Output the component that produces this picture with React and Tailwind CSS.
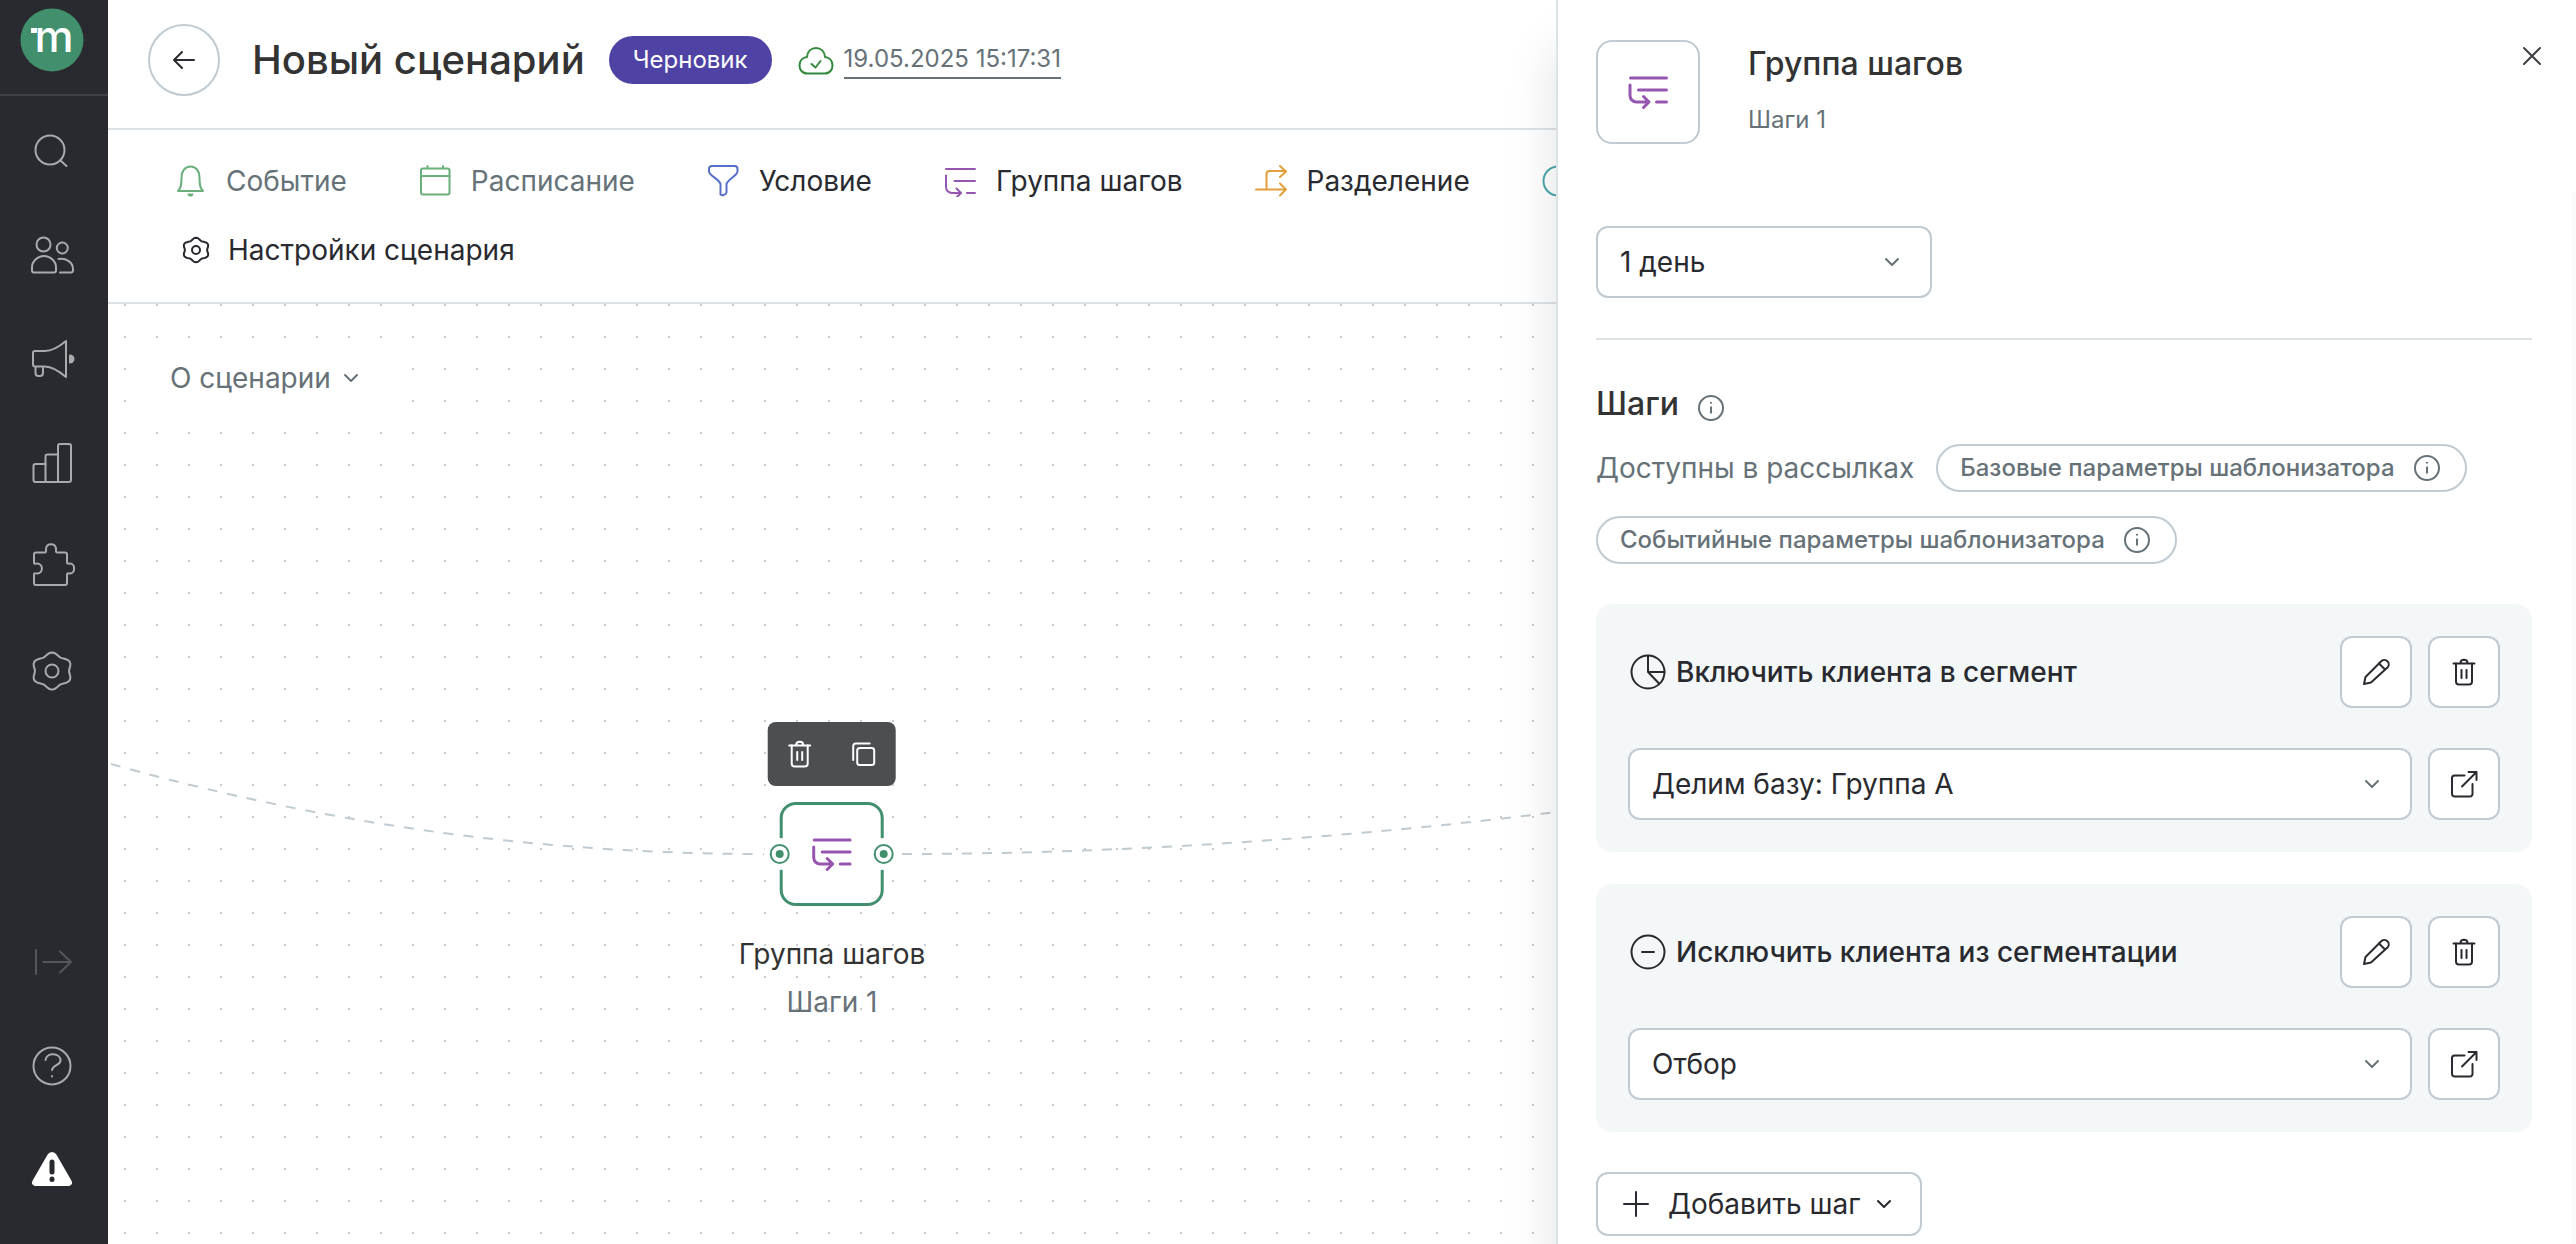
function gearPath(center, radius, depth) {
  const points = [];
  for (let deg = 0; deg < 360; deg += 5) {
    const angle = (deg * Math.PI) / 180;
    const r = radius + depth * Math.cos(6 * angle);
    const x = center + r * 1.1 * Math.sin(angle);
    const y = center - r * Math.cos(angle);
    points.push(`${x.toFixed(2)} ${y.toFixed(2)}`);
  }
  return `M${points.join("L")}Z`;
}

function Icon({ size, className = "", strokeWidth = 2, children }) {
  return (
    <svg
      className={`shrink-0 ${className}`}
      width={size}
      height={size}
      viewBox={`0 0 ${size} ${size}`}
      fill="none"
      stroke="currentColor"
      strokeWidth={strokeWidth}
      strokeLinecap="round"
      strokeLinejoin="round"
      aria-hidden="true"
    >
      {children}
    </svg>
  );
}

function ChevronIcon({ className }) {
  return (
    <Icon size={24} className={className}>
      <path d="M6 9l6 6 6-6" />
    </Icon>
  );
}

function InfoIcon() {
  return (
    <Icon size={32} className="text-[#667278]">
      <circle cx="16" cy="16" r="12" />
      <path d="M16 14.500v7" strokeLinecap="butt" />
      <path d="M16 10v1.500" strokeLinecap="butt" />
    </Icon>
  );
}

function TrashIcon({ className }) {
  return (
    <Icon size={32} className={className}>
      <path d="M5.500 7.500h21M12.500 7c0-4.500 7-4.500 7 0" />
      <path d="M8 7.500v18a3 3 0 0 0 3 3h10a3 3 0 0 0 3-3v-18" />
      <path d="M13.500 14v8M18.500 14v8" />
    </Icon>
  );
}

function PencilIcon() {
  return (
    <Icon size={32}>
      <path d="M4 28l1.500-7L21.500 5a4.400 4.400 0 0 1 6.200 6.200L11 26.500 4 28Z" />
      <path d="M19 7.500l5.500 5.500" />
    </Icon>
  );
}

function OpenIcon() {
  return (
    <Icon size={32}>
      <path d="M16.500 7.500H6.500a2.500 2.500 0 0 0-2.500 2.500V26a2.500 2.500 0 0 0 2.500 2.500h15.500a2.500 2.500 0 0 0 2.500-2.500V16" />
      <path d="M14 18.500L28 4.500M20.500 4h8v8" />
    </Icon>
  );
}

function StepsIcon() {
  return (
    <Icon size={32} className="text-[#9656af]">
      <path d="M2 4h29M10.500 16H31M23 28h8" />
      <path d="M2 10.500V22a6 6 0 0 0 6 6h9M12.500 23.500L17 28l-4.500 4.500" />
    </Icon>
  );
}

function StepsLargeIcon() {
  return (
    <Icon size={40} strokeWidth={3} className="text-[#9656af]">
      <path d="M2.500 6h36M10.500 18h28M28.500 30h10" />
      <path d="M2 13v10.500A6.500 6.500 0 0 0 8.500 30H20M15.500 24.500L21 30l-5.500 5.500" />
    </Icon>
  );
}

const navItems = [
  {
    label: "Поиск",
    icon: (
      <>
        <circle cx="22" cy="23" r="14.500" />
        <path d="M32.500 33.500l6 5.500" />
      </>
    ),
  },
  {
    label: "Клиенты",
    icon: (
      <>
        <circle cx="15.500" cy="13.500" r="7" />
        <circle cx="34.300" cy="17" r="5.500" />
        <path d="M6 41.500h20a2 2 0 0 0 2-2v-3C28 30 22 25 16 25S4 30 4 36.500v3a2 2 0 0 0 2 2Z" />
        <path d="M30.500 28C37.500 26.500 45 31 45 38v1.500a2 2 0 0 1-2 2H32" />
      </>
    ),
  },
  {
    label: "Кампании",
    icon: (
      <>
        <path d="M7 16h10c8 0 15-5 21-10v36c-6-5-13-10.500-21-10.500H7a2 2 0 0 1-2-2V18a2 2 0 0 1 2-2Z" />
        <path d="M7.500 32v6a3 3 0 0 0 3 3h1.500a3 3 0 0 0 3-3v-6" />
        <path d="M42 20.500a3.500 3.500 0 0 1 0 7z" fill="currentColor" />
      </>
    ),
  },
  {
    label: "Отчёты",
    icon: (
      <>
        <path d="M17.500 43H7.500a2 2 0 0 1-2-2V27a2 2 0 0 1 2-2h10" />
        <path d="M17.500 43V17.500a2 2 0 0 1 2-2H30" />
        <path d="M30 43V7a2 2 0 0 1 2-2h9a2 2 0 0 1 2 2v34a2 2 0 0 1-2 2H17.500" />
      </>
    ),
  },
  {
    label: "Интеграции",
    icon: (
      <path d="M8 9.500h8.500c2 0 1.500-1.500 1.500-3.500C18-.5 28-.5 28 6c0 2-.5 3.500 1.500 3.500H37a2 2 0 0 1 2 2V19c0 2.500 1.500 1.500 3 1.500 5.500 0 5.500 10 0 10-1.500 0-3-1-3 1.500v8a2 2 0 0 1-2 2H8a2 2 0 0 1-2-2v-8c0-2.500 1-1.500 3-1.500 6.500 0 6.500-10 0-10-2 0-3 1-3-1.500v-7.500a2 2 0 0 1 2-2Z" />
    ),
  },
  {
    label: "Настройки",
    icon: (
      <>
        <path d={gearPath(24, 17, 1.5)} />
        <circle cx="24" cy="24" r="6.500" />
      </>
    ),
  },
];

function Sidebar() {
  return (
    <aside className="flex w-[108px] shrink-0 flex-col bg-[#292a2f] text-[#a9aaac]">
      <a href="#" aria-label="mindbox" className="flex h-24 items-start border-b-2 border-[#3f4045] px-5 py-2">
        <svg width="64" height="64" viewBox="0 0 64 64">
          <circle cx="32" cy="32" r="31.500" fill="#418f6d" />
          <rect x="11" y="20" width="6" height="5" fill="#fff" />
          <text
            x="34"
            y="44"
            textAnchor="middle"
            fill="#fff"
            fontFamily="Inter, sans-serif"
            fontSize="44"
            fontWeight="500"
          >
            m
          </text>
        </svg>
      </a>
      <nav className="flex flex-col gap-10 px-5 pt-[23px]">
        {navItems.map((item) => (
          <button key={item.label} type="button" aria-label={item.label} className="flex size-16 items-center justify-center">
            <Icon size={48}>{item.icon}</Icon>
          </button>
        ))}
      </nav>
      <div className="mt-auto flex flex-col gap-10 px-5 pb-[42px]">
        <button type="button" aria-label="Развернуть" className="flex size-16 items-center justify-center text-[#55565a]">
          <Icon size={48}>
            <path d="M8 12v24M15.500 24H43M32 13.500L43 24 32 34.500" />
          </Icon>
        </button>
        <button type="button" aria-label="Помощь" className="flex size-16 items-center justify-center">
          <Icon size={48}>
            <circle cx="24" cy="24" r="18.500" />
            <path d="M17.500 18c1-8 15-7.500 15 .5 0 5-8 4-8.500 9.500" />
            <path d="M24 34v.5" />
          </Icon>
        </button>
        <button type="button" aria-label="Предупреждения" className="flex size-16 items-center justify-center text-white">
          <Icon size={48}>
            <path d="M20.500 9c1.500-2.700 5.500-2.700 7 0l15 26c1.300 2.300 0 4-2 4h-33c-2 0-3.300-1.700-2-4Z" fill="currentColor" />
            <path d="M24 16v10" className="text-[#292a2f]" strokeWidth="5" />
            <path d="M24 33v.5" className="text-[#292a2f]" strokeWidth="5" />
          </Icon>
        </button>
      </div>
    </aside>
  );
}

function Header() {
  return (
    <header className="flex items-center gap-6 border-b-2 border-[#dce3e7] px-10 pt-6 pb-8">
      <button
        type="button"
        aria-label="Назад"
        className="mr-2 flex size-[72px] shrink-0 items-center justify-center rounded-full border-2 border-[#bfcad2] text-[#292a2f]"
      >
        <Icon size={32}>
          <path d="M26 16H6M14 8l-8 8 8 8" />
        </Icon>
      </button>
      <h1 className="text-[40px] leading-12 font-medium text-[#333]">Новый сценарий</h1>
      <span className="rounded-full bg-[#4f42a5] px-6 text-2xl leading-12 text-white">Черновик</span>
      <div className="flex items-center gap-2">
        <Icon size={40} className="text-[#368a3f]">
          <path d="M11.500 33.500C6 33.500 3.500 29.500 3.500 25.500c0-4.500 3-8 7.500-8.500.5-5.500 4-9 9-9s8.500 3.500 9 9c4.500.5 7.500 4 7.500 8.500 0 4-2.500 8-8 8Z" />
          <path d="M15.500 24l4 3.500 5-6.500" />
        </Icon>
        <button type="button" className="border-b-2 border-[#667278] text-2xl leading-9 text-[#667278]">
          19.05.2025 15:17:31
        </button>
      </div>
    </header>
  );
}

const tools = [
  {
    label: "Событие",
    tone: "text-[#667278]",
    icon: (
      <Icon size={32} className="text-[#6bb07c]">
        <path d="M4 26h25c-3-3-3.500-6-3.500-13 0-7-3.500-11.500-9-11.500S7.500 6 7.500 13c0 7-.5 10-3.500 13Z" />
        <path d="M14.500 29.500h4c-.5 1.500-3.500 1.500-4 0Z" fill="currentColor" />
      </Icon>
    ),
  },
  {
    label: "Расписание",
    tone: "text-[#667278]",
    icon: (
      <Icon size={32} className="text-[#6bb07c]">
        <rect x="2" y="3.500" width="28.500" height="26" rx="2" />
        <path d="M2 11h28.500M8.500 1v2M24 1v2" />
      </Icon>
    ),
  },
  {
    label: "Условие",
    tone: "text-[#292a2f]",
    icon: (
      <Icon size={32} className="text-[#566fc9]">
        <path d="M4.500 1h23A3 3 0 0 1 30.500 4v2.500c0 4-9.500 7.500-11 12.500v8.500c-.5 2-4 3.500-6 2V19C12 14 2 10.500 2 6.500V4A3 3 0 0 1 4.500 1Z" />
      </Icon>
    ),
  },
  { label: "Группа шагов", tone: "text-[#292a2f]", icon: <StepsIcon /> },
  {
    label: "Разделение",
    tone: "text-[#292a2f]",
    icon: (
      <Icon size={32} className="text-[#e29f3c]">
        <path d="M1 24.500h30M25 18.500l6 6-6 6" />
        <path d="M11.500 24.500V9A3 3 0 0 1 14.500 6H31M25 1l6 5.500-6 5.500" />
      </Icon>
    ),
  },
];

function Toolbar() {
  return (
    <div className="flex flex-col gap-[29px] border-b-2 border-[#dce3e7] px-[66px] pt-[31px] pb-8 text-[28px] leading-10">
      <div className="flex items-center gap-[72px]">
        {tools.map((tool) => (
          <button key={tool.label} type="button" className={`flex items-center gap-5 ${tool.tone}`}>
            {tool.icon}
            {tool.label}
          </button>
        ))}
        <button type="button" aria-label="Ожидание">
          <Icon size={32} className="text-[#4ba7ac]">
            <circle cx="16" cy="16" r="14.500" />
            <path d="M16 8v8l5 4" />
          </Icon>
        </button>
      </div>
      <button type="button" className="ml-1.5 flex items-center gap-4 self-start text-[#292a2f]">
        <Icon size={32}>
          <path d={gearPath(16, 11.2, 1.1)} />
          <circle cx="16" cy="16" r="4" />
        </Icon>
        Настройки сценария
      </button>
    </div>
  );
}

function NodeHandle({ className }) {
  return (
    <span className={`absolute top-1/2 flex size-8 -translate-y-1/2 items-center justify-center rounded-full bg-white ${className}`}>
      <span className="flex size-5 items-center justify-center rounded-full border-2 border-[#418f6d]">
        <span className="size-2 rounded-full bg-[#418f6d]" />
      </span>
    </span>
  );
}

function Canvas() {
  return (
    <main className="relative flex-1 overflow-hidden">
      <svg className="absolute inset-0 size-full" fill="none">
        <defs>
          <pattern id="grid-dots" x="16" y="0" width="32" height="32" patternUnits="userSpaceOnUse">
            <rect width="2" height="2" fill="#ccc" />
          </pattern>
        </defs>
        <rect width="100%" height="100%" fill="url(#grid-dots)" />
        <g stroke="#c0cad1" strokeWidth="2" strokeDasharray="10 10">
          <path d="M3 460C153 502 372 550 656 550" />
          <path d="M794 550C1012 550 1242 534 1448 508" />
        </g>
      </svg>

      <button
        type="button"
        className="absolute top-[42px] left-10 flex items-center gap-2 bg-white py-3 pr-12 pl-[22px] text-[28px] leading-10 text-[#667278]"
      >
        О сценарии
        <ChevronIcon />
      </button>

      <div className="absolute top-[418px] left-[724px] flex -translate-x-1/2 flex-col items-center">
        <div className="flex h-16 w-32 items-center justify-around rounded-lg bg-[#4b4f52] text-white">
          <button type="button" aria-label="Удалить">
            <TrashIcon />
          </button>
          <button type="button" aria-label="Копировать">
            <Icon size={32}>
              <rect x="9.500" y="10" width="17" height="17" rx="2.500" />
              <path d="M5.500 22V8A2.500 2.500 0 0 1 8 5.500h14" />
            </Icon>
          </button>
        </div>
        <div className="relative mt-4 flex size-[104px] items-center justify-center rounded-2xl border-3 border-[#418f6d] bg-white">
          <StepsLargeIcon />
          <NodeHandle className="-left-[19px]" />
          <NodeHandle className="-right-[19px]" />
        </div>
        <p className="mt-6 text-[28px] leading-12 text-[#333]">Группа шагов</p>
        <p className="text-[28px] leading-12 text-[#667278]">Шаги 1</p>
      </div>
    </main>
  );
}

function SelectField({ label, options, className }) {
  return (
    <label className={`relative block ${className}`}>
      <select
        aria-label={label}
        className="h-[72px] w-full appearance-none rounded-xl border-2 border-[#bfcad2] bg-white pr-16 pl-[22px] text-[28px] text-[#292a2f]"
      >
        {options.map((option) => (
          <option key={option}>{option}</option>
        ))}
      </select>
      <ChevronIcon className="pointer-events-none absolute top-6 right-7 text-[#667278]" />
    </label>
  );
}

function SquareButton({ label, children }) {
  return (
    <button
      type="button"
      aria-label={label}
      className="flex size-[72px] shrink-0 items-center justify-center rounded-xl border-2 border-[#bfcad2] bg-white text-[#292a2f]"
    >
      {children}
    </button>
  );
}

function Chip({ children }) {
  return (
    <button
      type="button"
      className="flex h-12 items-center gap-4 rounded-full border-2 border-[#bfcad2] px-[22px] text-2xl font-medium text-[#667278]"
    >
      {children}
      <InfoIcon />
    </button>
  );
}

function StepCard({ icon, title, value }) {
  return (
    <section className="flex flex-col gap-10 rounded-2xl bg-[#f3f7f8] p-8">
      <div className="flex items-center gap-4">
        <h3 className="flex flex-1 items-center gap-2 text-[28px] leading-10 font-medium text-[#292a2f]">
          {icon}
          {title}
        </h3>
        <SquareButton label="Редактировать">
          <PencilIcon />
        </SquareButton>
        <SquareButton label="Удалить шаг">
          <TrashIcon />
        </SquareButton>
      </div>
      <div className="flex items-center gap-4">
        <SelectField label={title} options={[value]} className="flex-1" />
        <SquareButton label="Открыть">
          <OpenIcon />
        </SquareButton>
      </div>
    </section>
  );
}

function StepsPanel() {
  return (
    <aside className="absolute inset-y-0 right-0 flex w-[1020px] flex-col border-l-2 border-[#dce3e7] bg-white shadow-[0_48px_48px_rgba(0,0,0,0.12)]">
      <div className="flex h-48 shrink-0 items-start gap-12 pt-10 pr-7 pl-[38px]">
        <div className="flex size-[104px] items-center justify-center rounded-2xl border-2 border-[#bfcad2]">
          <StepsLargeIcon />
        </div>
        <div className="flex-1">
          <h2 className="text-[32px] leading-12 font-medium text-[#333]">Группа шагов</h2>
          <p className="mt-4 text-2xl leading-8 text-[#667278]">Шаги 1</p>
        </div>
        <button type="button" aria-label="Закрыть" className="text-[#3c3d42]">
          <Icon size={32}>
            <path d="M8 8l16 16M24 8L8 24" />
          </Icon>
        </button>
      </div>

      <div className="flex min-h-0 flex-1">
        <div className="flex-1 overflow-hidden pt-[34px] pr-10 pl-[38px]">
          <SelectField label="Период" options={["1 день"]} className="w-[336px]" />
          <hr className="mt-10 border-t-2 border-[#dce3e7]" />
          <div className="mt-11 flex items-end gap-4">
            <h2 className="text-[32px] leading-10 font-medium text-[#333]">Шаги</h2>
            <InfoIcon />
          </div>
          <div className="mt-5 flex flex-wrap items-center gap-x-[22px] gap-y-6">
            <span className="text-[28px] leading-10 text-[#667278]">Доступны в рассылках</span>
            <Chip>Базовые параметры шаблонизатора</Chip>
            <Chip>Событийные параметры шаблонизатора</Chip>
          </div>
          <div className="mt-10 flex flex-col gap-8">
            <StepCard
              title="Включить клиента в сегмент"
              value="Делим базу: Группа А"
              icon={
                <Icon size={40}>
                  <circle cx="20" cy="20" r="16.500" />
                  <path d="M20 3.500V20l11 11.500M20 20h16.500" />
                </Icon>
              }
            />
            <StepCard
              title="Исключить клиента из сегментации"
              value="Отбор"
              icon={
                <Icon size={40}>
                  <circle cx="20" cy="20" r="16.500" />
                  <path d="M14 20h12" />
                </Icon>
              }
            />
          </div>
          <button
            type="button"
            className="mt-10 flex h-16 items-center gap-3 rounded-xl border-2 border-[#bfcad2] pr-6 pl-[22px] text-[28px] text-[#292a2f]"
          >
            <Icon size={32} className="mr-1">
              <path d="M16 4v24M4 16h24" />
            </Icon>
            Добавить шаг
            <ChevronIcon />
          </button>
        </div>
        <div className="w-1 bg-[#fafafa]" />
      </div>
    </aside>
  );
}

export default function App() {
  return (
    <div className="relative flex h-screen overflow-hidden bg-white font-['Inter',sans-serif]">
      <Sidebar />
      <div className="flex min-w-0 flex-1 flex-col">
        <Header />
        <Toolbar />
        <Canvas />
      </div>
      <StepsPanel />
    </div>
  );
}
